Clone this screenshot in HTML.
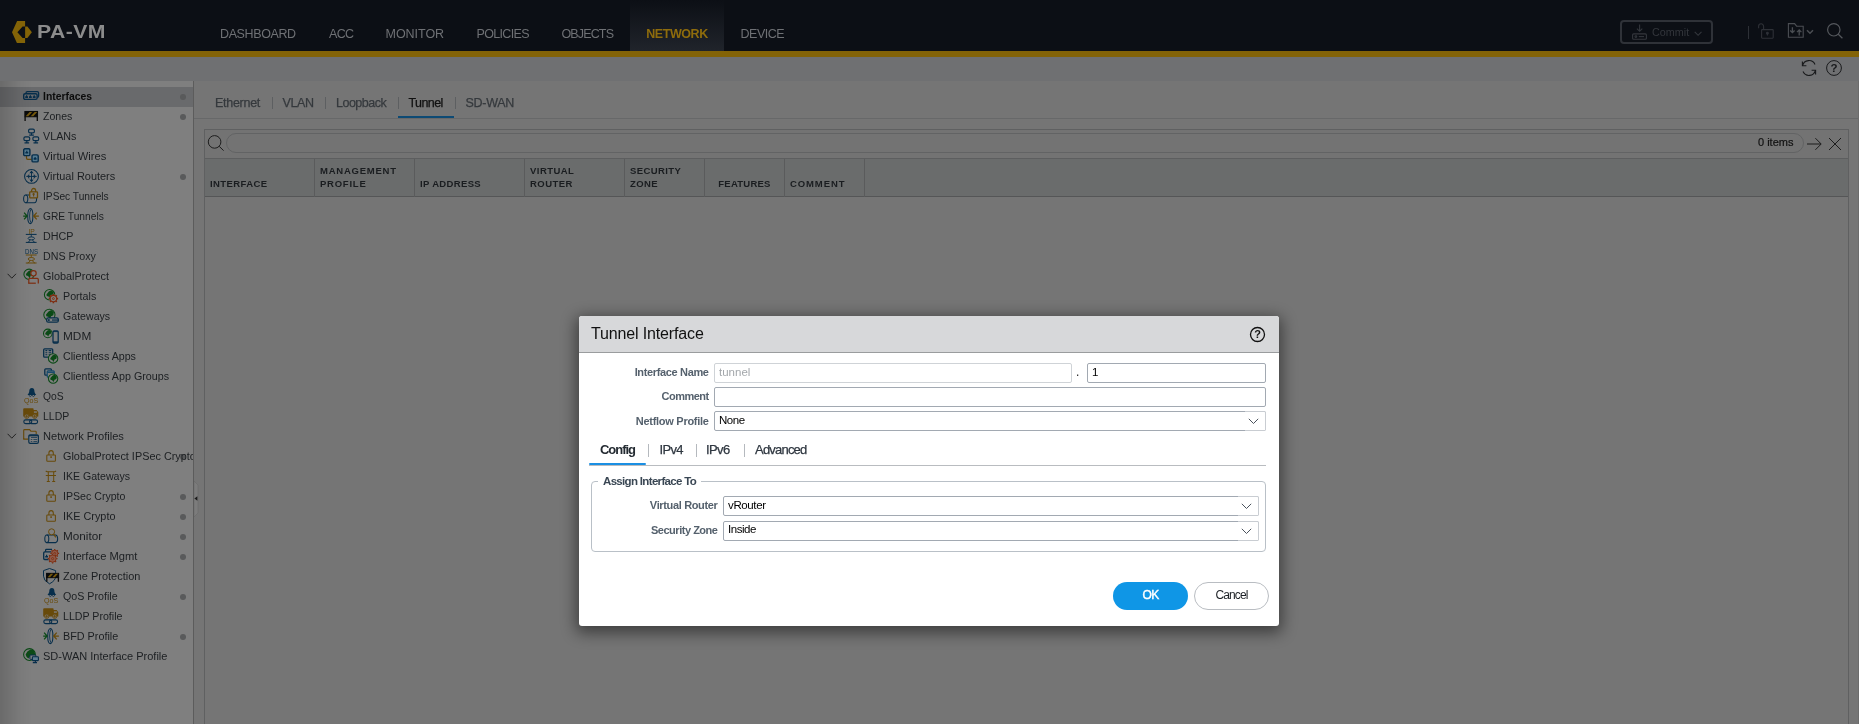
<!DOCTYPE html>
<html lang="en">
<head>
<meta charset="utf-8">
<title>PA-VM</title>
<style>
*{box-sizing:border-box;margin:0;padding:0}
html,body{width:1859px;height:724px;overflow:hidden;background:#757575;font-family:"Liberation Sans",sans-serif;font-size:12px;color:#1d1d1d}
.abs{position:absolute}
#root{position:absolute;left:0;top:0;width:1859px;height:724px;overflow:hidden;will-change:transform;transform:translateZ(0)}
#hdr{position:absolute;left:0;top:0;width:1859px;height:51px;background:#0c0f15}
#gold{position:absolute;left:0;top:51px;width:1859px;height:6px;background:#836307}
#tb{position:absolute;left:0;top:57px;width:1859px;height:24px;background:#6f7072}
#brand{position:absolute;left:37px;top:20px;font-weight:bold;font-size:19px;line-height:24px;color:#8c8c8c;letter-spacing:0.4px;transform-origin:0 0;transform:scaleX(1.115);white-space:nowrap}
.nav{position:absolute;top:0;height:51px;line-height:15px;font-size:12.5px;color:#6f7175;white-space:nowrap;padding-top:27px}
.nav.act{color:#8e6c0c;font-weight:bold;background:linear-gradient(#0c0f15,#20242b);text-align:center}
#commit{position:absolute;left:1620px;top:20px;width:93px;height:24px;border:2px solid #2f3238;border-radius:4px}
#commit span{position:absolute;left:30px;top:3px;font-size:10.8px;line-height:14px;color:#33363c}
/* sidebar */
#side{position:absolute;left:0;top:81px;width:193px;height:643px;background:#7f7f7f;overflow:hidden}
#sideb{position:absolute;left:193px;top:81px;width:1px;height:643px;background:#5c5c5c}
#sideshadow{position:absolute;left:0;top:81px;width:32px;height:643px;background:linear-gradient(90deg,rgba(0,0,0,.16),rgba(0,0,0,.1) 30%,rgba(0,0,0,.035) 65%,rgba(0,0,0,0))}
.it{position:absolute;left:0;width:193px;height:20px;line-height:19px;font-size:11.7px;color:#1c1f22;white-space:nowrap}
.it.sel{background:#696a6c;font-weight:bold;color:#0c0c0c}
.it span{position:absolute;left:43px;top:-1.2px;transform-origin:0 50%}
.it.c span{left:63px}
.it i{position:absolute;left:180px;top:7px;width:6px;height:6px;border-radius:3px;background:#595a5b}
.it svg{position:absolute;left:23px;top:1px;overflow:visible}
.it.c svg{left:43px}
/* main */
#main{position:absolute;left:194px;top:81px;width:1665px;height:643px;background:#757575}
.tab{position:absolute;top:96px;font-size:12.5px;line-height:14px;color:#35393d;-webkit-text-stroke:0.25px #35393d;white-space:nowrap}
.tsep{position:absolute;top:97px;width:1px;height:12px;background:#5d5f61}
#grid{position:absolute;left:204px;top:129px;width:1645px;height:600px;border:1px solid #5f6061;background:#757575}
.hc{position:absolute;top:29px;height:38px;border-right:1px solid #5a5b5c;font-size:9.5px;font-weight:bold;line-height:13px;color:#1a1d20;white-space:nowrap}
.hc span{position:absolute;left:5px;bottom:7.5px}
/* dialog */
#dlg{position:absolute;left:579px;top:316px;width:700px;height:310px;background:#fff;border-radius:3px;box-shadow:0 4px 15px 3px rgba(0,0,0,.47)}
#dlgh{position:absolute;left:0;top:0;width:700px;height:37px;background:#d7d8da;border-radius:3px 3px 0 0;border-bottom:1px solid #9a9c9e}
.lbl{position:absolute;font-size:11px;font-weight:bold;line-height:14px;color:#55616d;text-align:right;white-space:nowrap}
.inp{position:absolute;height:20px;border:1px solid #a2a9b2;border-radius:2px;background:#fff;font-size:11.5px;line-height:17px;padding-left:4px;color:#000}
.dtab{position:absolute;top:126px;font-size:13px;line-height:16px;color:#2f3740;-webkit-text-stroke:0.25px #2f3740;white-space:nowrap}
.dsep{position:absolute;top:128px;width:1px;height:13px;background:#b5b9be}
.trg{position:absolute;right:-1px;top:-1px;width:21px;height:20px;border:1px solid #c9cdd2;border-left:none;border-radius:0 2px 2px 0;background:#fff}
</style>
</head>
<body>
<div id="root">
<div id="hdr"></div>
<div id="gold"></div>
<div id="tb"></div>
<svg class="abs" style="left:12px;top:20.8px" width="20" height="22.4" viewBox="0 0 20 22.4"><path d="M5.1 0H13.1V5.4H10.6L5.4 11.2L10.6 17H13.1V22.4H5.1L0 11.2Z" fill="#836307"/><path d="M13.1 5.4H15.4L19.9 11.2L15.4 17H13.1Z" fill="#836307"/></svg>
<div id="brand">PA-VM</div>
<div class="nav" style="left:220px;letter-spacing:-0.38px">DASHBOARD</div>
<div class="nav" style="left:329px;letter-spacing:-0.63px">ACC</div>
<div class="nav" style="left:385.5px;letter-spacing:-0.03px">MONITOR</div>
<div class="nav" style="left:476.5px;letter-spacing:-0.67px">POLICIES</div>
<div class="nav" style="left:561.5px;letter-spacing:-0.86px">OBJECTS</div>
<div class="nav act" style="left:630px;width:94px;letter-spacing:-0.42px">NETWORK</div>
<div class="nav" style="left:740.5px;letter-spacing:-0.49px">DEVICE</div>
<div id="commit"><svg class="abs" style="left:10px;top:2px" width="16" height="17" viewBox="0 0 16 17" fill="none" stroke="#34373d" stroke-width="1.1"><path d="M7.6 0.6V7.2M4.9 4.6L7.6 7.3L10.3 4.6"/><rect x="0.6" y="9.9" width="13.8" height="5.4" rx="1"/><circle cx="3.9" cy="12.6" r="0.9"/><path d="M6.8 12.6H12"/></svg><span>Commit</span><svg class="abs" style="left:72px;top:8.5px" width="9" height="6" viewBox="0 0 9 6" fill="none" stroke="#34373d" stroke-width="1.1"><path d="M0.7 0.9L4.1 4.3L7.5 0.9"/></svg></div>
<div class="abs" style="left:1748px;top:26px;width:1px;height:13px;background:#2d3036"></div>
<svg class="abs" style="left:1757px;top:22px" width="18" height="18" viewBox="0 0 18 18" fill="none" stroke="#2e3137" stroke-width="1.1"><path d="M1.6 6.3V4.3A2.5 2.5 0 0 1 6.6 4.3V7.6"/><rect x="4.6" y="7.6" width="11.6" height="8.6" rx="0.6"/><circle cx="10.4" cy="11.2" r="0.9" fill="#2e3137"/><path d="M10.4 11.6V13.6"/></svg>
<svg class="abs" style="left:1787px;top:22px" width="28" height="18" viewBox="0 0 28 18" fill="none" stroke="#4b4e53" stroke-width="1.1"><path d="M1.4 15.2V1.6H7.6L9.6 4.2H16.2V15.2Z"/><path d="M5.4 5.2V10.6M3.2 8.5L5.4 10.7L7.6 8.5M12.2 13.4V8M10 10.1L12.2 7.9L14.4 10.1" stroke-width="1.3"/><path d="M20 8.2L23 11.2L26 8.2" stroke-width="1.5"/></svg>
<svg class="abs" style="left:1825px;top:22px" width="20" height="18" viewBox="0 0 20 18" fill="none" stroke="#55585d" stroke-width="1.2"><circle cx="8.8" cy="7.8" r="6.2"/><path d="M13.3 12.2L17.4 16.2"/></svg>
<svg class="abs" style="left:1800px;top:59px" width="18" height="18" viewBox="0 0 18 18" fill="none" stroke="#191a1c" stroke-width="1.1"><path d="M2.6 6.6A6.6 6.6 0 0 1 15 5.4M15.4 11.4A6.6 6.6 0 0 1 3 12.6"/><path d="M2.4 2.6V6.8H6.4M15.6 15.4V11.2H11.6"/></svg>
<svg class="abs" style="left:1825px;top:59px" width="18" height="18" viewBox="0 0 18 18"><circle cx="9" cy="9" r="7.4" fill="none" stroke="#191a1c" stroke-width="1"/><text x="9" y="13" text-anchor="middle" font-family="Liberation Sans, sans-serif" font-size="11.5" font-weight="bold" fill="#191a1c">?</text></svg>

<div id="side"><!--S-->
<div class="it sel" style="top:6px"><i></i><svg width="17" height="17" viewBox="0 0 17 17" fill="none" ><rect x="3" y="3.6" width="12.6" height="5.8" rx="1.4" stroke="#072e4b" stroke-width="1.30"/><rect x="0.7" y="5.7" width="13.4" height="5.7" rx="1.4" fill="#696a6c" stroke="#072e4b" stroke-width="1.40"/><path d="M2.2 10.0V8.299999999999999H3.0V7.199999999999999H4.2V8.299999999999999H5.0V10.0Z" fill="#072e4b"/><path d="M6.0 10.0V8.299999999999999H6.800000000000001V7.199999999999999H8.0V8.299999999999999H8.8V10.0Z" fill="#072e4b"/><path d="M9.799999999999999 10.0V8.299999999999999H10.6V7.199999999999999H11.799999999999999V8.299999999999999H12.6V10.0Z" fill="#072e4b"/></svg><span style="transform:scaleX(0.890)">Interfaces</span></div>
<div class="it" style="top:26px"><i></i><svg width="17" height="17" viewBox="0 0 17 17" fill="none" ><rect x="1.9" y="3.5" width="12.6" height="5.2" fill="#0b0b0b" stroke="#0b0b0b" stroke-width="1.10"/><path d="M6.62 3.9L9.14 3.9L5.24 8.299999999999999L2.72 8.299999999999999ZM11.66 3.9L14.18 3.9L10.28 8.299999999999999L7.76 8.299999999999999Z" fill="#76590c"/><path d="M2.1 8.7V12.899999999999999M14.3 8.7V12.899999999999999" stroke="#0b0b0b" stroke-width="1.30"/></svg><span style="transform:scaleX(0.901)">Zones</span></div>
<div class="it" style="top:46px"><svg width="17" height="17" viewBox="0 0 17 17" fill="none" ><g stroke="#072e4b" stroke-width="1.15"><rect x="5.6" y="1.1" width="5.8" height="3.8" rx="1.4"/><path d="M8.5 4.9V6.9M6.2 7.1H10.8"/><rect x="0.9" y="8.8" width="5.8" height="3.8" rx="1.4"/><path d="M3.8 12.6V14.6M1.5 14.8H6.1"/><rect x="9.9" y="8.8" width="5.8" height="3.8" rx="1.4"/><path d="M12.8 12.6V14.6M10.5 14.8H15.1"/></g></svg><span style="transform:scaleX(0.920)">VLANs</span></div>
<div class="it" style="top:66px"><svg width="17" height="17" viewBox="0 0 17 17" fill="none" ><path d="M3.5 8V10Q3.5 11.3 4.8 11.3H8.6" stroke="#684a0a" stroke-width="1.20"/><rect x="0.7" y="0.8" width="6.2" height="6.8" rx="1.2" fill="#557a90" stroke="#072e4b" stroke-width="1.40"/><path d="M2.4 5.6V3.9000000000000004H3.1999999999999997V2.8000000000000003H4.3999999999999995V3.9000000000000004H5.199999999999999V5.6Z" fill="#072e4b"/><rect x="9" y="6.9" width="6.2" height="7" rx="1.2" fill="#557a90" stroke="#072e4b" stroke-width="1.40"/><path d="M10.7 11.8V10.1H11.5V9.0H12.7V10.1H13.5V11.8Z" fill="#072e4b"/></svg><span style="transform:scaleX(0.958)">Virtual Wires</span></div>
<div class="it" style="top:86px"><i></i><svg width="17" height="17" viewBox="0 0 17 17" fill="none" ><circle cx="8.5" cy="8.4" r="6.9" stroke="#072e4b" stroke-width="1.05"/><path d="M8.5 3.6V13.2M3.4 8.4H13.6" stroke="#072e4b" stroke-width="0.95"/><path d="M8.5 2.6L6.6 5H10.4ZM8.5 14.2L6.6 11.8H10.4ZM7.4 8.4L5.2 6.6V10.2ZM9.6 8.4L11.8 6.6V10.2Z" fill="#072e4b"/><path d="M8.5 4L12.9 8.4L8.5 12.8L4.1 8.4Z" stroke="#072e4b" stroke-width="0.70" stroke-dasharray="1 0.8"/></svg><span style="transform:scaleX(0.937)">Virtual Routers</span></div>
<div class="it" style="top:106px"><svg width="17" height="17" viewBox="0 0 17 17" fill="none" ><path d="M2.6 6.9H11.4A2.2 3.9 0 0 1 11.4 14.7H2.6" stroke="#072e4b" stroke-width="1.05"/><ellipse cx="2.7" cy="10.8" rx="2.1" ry="3.9" stroke="#072e4b" stroke-width="1.05"/><rect x="6.7" y="3.9" width="7.8" height="6" rx="0.6" fill="#7f7f7f" stroke="#684a0a" stroke-width="1.30"/><path d="M8.6 3.9V2.6A2 2.1 0 0 1 12.6 2.6V3.9" stroke="#684a0a" stroke-width="1.30"/><circle cx="10.6" cy="6.2" r="1.1" fill="#684a0a"/><path d="M10.6 6.4V8.4" stroke="#684a0a" stroke-width="1.10"/></svg><span style="transform:scaleX(0.872)">IPSec Tunnels</span></div>
<div class="it" style="top:126px"><svg width="17" height="17" viewBox="0 0 17 17" fill="none" ><ellipse cx="7.3" cy="8" rx="2.6" ry="7.6" stroke="#072e4b" stroke-width="1.05"/><path d="M8.0 1.2C6.1 4 6.1 12 8.0 14.8" stroke="#072e4b" stroke-width="0.85"/><path d="M0.2 8H4.3M1.0999999999999996 4.6L4.1 8L1.0999999999999996 11.4" stroke="#0b4a16" stroke-width="1.25"/><path d="M15.899999999999999 8H10.5M13.7 4.6L10.7 8L13.7 11.4" stroke="#684a0a" stroke-width="1.25"/></svg><span style="transform:scaleX(0.875)">GRE Tunnels</span></div>
<div class="it" style="top:146px"><svg width="17" height="17" viewBox="0 0 17 17" fill="none" ><text x="8.6" y="5.5" text-anchor="middle" font-family="Liberation Sans, sans-serif" font-size="6.4" fill="#684a0a" textLength="6.4" lengthAdjust="spacingAndGlyphs">IP</text><path d="M2.8 6.4H13.6M2.8 14.4H13.6" stroke="#072e4b" stroke-width="1.00"/><ellipse cx="8.3" cy="10.4" rx="3.2" ry="1.5" stroke="#072e4b" stroke-width="0.95"/><path d="M8.3 6.4V8.9M7 11.9Q6.8 13.8 4.6 14.4M9.6 11.9Q9.8 13.8 12 14.4" stroke="#072e4b" stroke-width="0.85"/></svg><span style="transform:scaleX(0.920)">DHCP</span></div>
<div class="it" style="top:166px"><svg width="17" height="17" viewBox="0 0 17 17" fill="none" ><text x="8.5" y="5.7" text-anchor="middle" font-family="Liberation Sans, sans-serif" font-size="6.4" fill="#072e4b" textLength="13" lengthAdjust="spacingAndGlyphs">DNS</text><path d="M2.8 7H13.6M2.8 15H13.6" stroke="#684a0a" stroke-width="1.00"/><ellipse cx="8.3" cy="11" rx="3.2" ry="1.5" stroke="#684a0a" stroke-width="0.95"/><path d="M8.3 7V9.5M7 12.5Q6.8 14.4 4.6 15M9.6 12.5Q9.8 14.4 12 15" stroke="#684a0a" stroke-width="0.85"/></svg><span style="transform:scaleX(0.914)">DNS Proxy</span></div>
<div class="it" style="top:186px"><svg style="left:7px;top:6px" width="10" height="7" viewBox="0 0 10 7" fill="none"><path d="M0.6 0.8L4.8 5.2L9 0.8" stroke="#262626" stroke-width="1"/></svg><svg width="17" height="17" viewBox="0 0 17 17" fill="none" ><circle cx="6.1" cy="6.3" r="5.20" stroke="#0b4a16" stroke-width="1.05"/><path d="M2.98 6.04L5.32 3.18L7.92 1.88L10.26 3.96L9.74 6.82L7.66 7.60L6.72 10.20L5.06 8.12L3.24 7.60Z" fill="#0b4a16"/><circle cx="10.5" cy="5.3" r="2.7" fill="#7f7f7f" stroke="#7e2d10" stroke-width="1.20"/><path d="M5.8 15.2V11.4Q5.8 10.4 6.8 10.4H14.3Q15.3 10.4 15.3 11.4V15.6" fill="#7f7f7f" stroke="#7e2d10" stroke-width="1.20"/><path d="M5.2 15.2H12.8" stroke="#7e2d10" stroke-width="1.20"/></svg><span style="transform:scaleX(0.933)">GlobalProtect</span></div>
<div class="it c" style="top:206px"><svg width="17" height="17" viewBox="0 0 17 17" fill="none" ><circle cx="6.6" cy="6.7" r="5.20" stroke="#0b4a16" stroke-width="1.05"/><path d="M3.48 6.44L5.82 3.58L8.42 2.28L10.76 4.36L10.24 7.22L8.16 8.00L7.22 10.60L5.56 8.52L3.74 8.00Z" fill="#0b4a16"/><circle cx="10.4" cy="10.6" r="4.03" fill="#7f7f7f"/><path d="M10.40 7.40L10.40 5.90M12.66 8.34L13.72 7.28M13.60 10.60L15.10 10.60M12.66 12.86L13.72 13.92M10.40 13.80L10.40 15.30M8.14 12.86L7.08 13.92M7.20 10.60L5.70 10.60M8.14 8.34L7.08 7.28" stroke="#7e2d10" stroke-width="1.59"/><circle cx="10.4" cy="10.6" r="3.20" fill="#7f7f7f" stroke="#7e2d10" stroke-width="1.10"/><circle cx="10.4" cy="10.6" r="0.96" fill="none" stroke="#7e2d10" stroke-width="0.88"/></svg><span style="transform:scaleX(0.914)">Portals</span></div>
<div class="it c" style="top:226px"><svg width="17" height="17" viewBox="0 0 17 17" fill="none" ><circle cx="6.4" cy="6.8" r="5.60" stroke="#0b4a16" stroke-width="1.05"/><path d="M3.04 6.52L5.56 3.44L8.36 2.04L10.88 4.28L10.32 7.36L8.08 8.20L7.07 11.00L5.28 8.76L3.32 8.20Z" fill="#0b4a16"/><rect x="3.7" y="9.9" width="11.6" height="4.3" rx="1.5" fill="#7f7f7f" stroke="#072e4b" stroke-width="1.30"/><rect x="5" y="11.2" width="1.7" height="1.7" fill="#072e4b"/><path d="M9 12.05H15.4" stroke="#072e4b" stroke-width="1.20"/></svg><span style="transform:scaleX(0.907)">Gateways</span></div>
<div class="it c" style="top:246px"><svg width="17" height="17" viewBox="0 0 17 17" fill="none" ><circle cx="4.8" cy="5.4" r="4.30" stroke="#0b4a16" stroke-width="1.05"/><path d="M2.22 5.19L4.15 2.82L6.30 1.74L8.24 3.46L7.81 5.83L6.09 6.48L5.32 8.62L3.94 6.91L2.43 6.48Z" fill="#0b4a16"/><rect x="10" y="2.8" width="5.2" height="12.4" rx="1.1" fill="#7f7f7f" stroke="#072e4b" stroke-width="1.25"/><path d="M10 14.1H15.2" stroke="#072e4b" stroke-width="1.50"/><path d="M10 3.6H15.2" stroke="#072e4b" stroke-width="0.90"/></svg><span style="transform:scaleX(1.012)">MDM</span></div>
<div class="it c" style="top:266px"><svg width="17" height="17" viewBox="0 0 17 17" fill="none" ><rect x="0.7" y="0.8" width="9" height="8.4" rx="0.9" stroke="#072e4b" stroke-width="1.30"/><path d="M2.4 2.6H4.3M5.6 2.6H8.3M2.4 4.7H4.3M5.6 4.7H8.3M2.4 6.8H4.3M5.6 6.8H8.3" stroke="#072e4b" stroke-width="1.10"/><circle cx="10.1" cy="10.4" r="4.70" fill="#7f7f7f" stroke="#0b4a16" stroke-width="1.05"/><path d="M7.28 10.17L9.39 7.58L11.74 6.41L13.86 8.29L13.39 10.87L11.51 11.58L10.66 13.93L9.16 12.04L7.51 11.58Z" fill="#0b4a16"/></svg><span style="transform:scaleX(0.913)">Clientless Apps</span></div>
<div class="it c" style="top:286px"><svg width="17" height="17" viewBox="0 0 17 17" fill="none" ><rect x="1.8" y="0.8" width="6.6" height="6.4" rx="0.9" stroke="#072e4b" stroke-width="1.30"/><rect x="4.2" y="2.8" width="7" height="6.4" rx="0.9" fill="#7f7f7f" stroke="#164a6c" stroke-width="1.20"/><path d="M4.2 4.3H11.2" stroke="#164a6c" stroke-width="1.30"/><circle cx="10.1" cy="10.6" r="4.70" fill="#7f7f7f" stroke="#0b4a16" stroke-width="1.05"/><path d="M7.28 10.37L9.39 7.78L11.74 6.60L13.86 8.48L13.39 11.07L11.51 11.78L10.66 14.12L9.16 12.24L7.51 11.78Z" fill="#0b4a16"/></svg><span style="transform:scaleX(0.917)">Clientless App Groups</span></div>
<div class="it" style="top:306px"><svg width="17" height="17" viewBox="0 0 17 17" fill="none" ><path d="M8.85 0.1C6.9 0.1 6.3 1.7 6.3 3.1C6.3 4.7 5.6 5.8 4.5 6.9H13.2C12.1 5.8 11.4 4.7 11.4 3.1C11.4 1.7 10.8 0.1 8.85 0.1Z" fill="#072e4b"/><path d="M5.6 7.2L7.3 8.5L8.85 7.3L10.4 8.5L12.1 7.2" stroke="#072e4b" stroke-width="0.90"/><text x="8.2" y="15.2" text-anchor="middle" font-family="Liberation Sans, sans-serif" font-size="7.6" fill="#684a0a" textLength="14.2" lengthAdjust="spacingAndGlyphs">QoS</text></svg><span style="transform:scaleX(0.880)">QoS</span></div>
<div class="it" style="top:326px"><svg width="17" height="17" viewBox="0 0 17 17" fill="none" ><path d="M0.2 1.2Q0.2 0.2 1.2 0.2H9.8Q10.6 0.2 10.6 1V2H13.6L15.3 4.2V8.6H0.2Z" fill="#684a0a"/><rect x="10.9" y="3.2" width="3" height="1.7" fill="#7f7f7f" opacity="0.8"/><circle cx="3.7" cy="8.2" r="2.2" fill="#7f7f7f" stroke="#684a0a" stroke-width="0.90"/><circle cx="11.7" cy="8.2" r="2.2" fill="#7f7f7f" stroke="#684a0a" stroke-width="0.90"/><path d="M3.7 6.6V9.8M2.1 8.2H5.3M11.7 6.6V9.8M10.1 8.2H13.3" stroke="#684a0a" stroke-width="0.90"/><rect x="0.8" y="11.9" width="8" height="3.7" rx="1.85" stroke="#072e4b" stroke-width="1.10"/><rect x="6.6" y="11.9" width="8" height="3.7" rx="1.85" stroke="#072e4b" stroke-width="1.10"/></svg><span style="transform:scaleX(0.898)">LLDP</span></div>
<div class="it" style="top:346px"><svg style="left:7px;top:6px" width="10" height="7" viewBox="0 0 10 7" fill="none"><path d="M0.6 0.8L4.8 5.2L9 0.8" stroke="#262626" stroke-width="1"/></svg><svg width="17" height="17" viewBox="0 0 17 17" fill="none" ><path d="M0.7 10.4V2.4Q0.7 1.6 1.5 1.6H6.6L7.9 3.2H12.4Q13.2 3.2 13.2 4V6" stroke="#684a0a" stroke-width="1.10"/><path d="M0.7 10V11.1H5" stroke="#684a0a" stroke-width="1.10"/><rect x="5.8" y="6.8" width="9.6" height="8.6" rx="1.4" fill="#7f7f7f" stroke="#072e4b" stroke-width="1.15"/><path d="M5.8 7.7H15.4" stroke="#072e4b" stroke-width="1.20"/><path d="M8 9.5H14.2M7.8 11.5H9.3M10.4 11.5H14.2M7.8 13.5H9.3M10.4 13.5H14.2" stroke="#072e4b" stroke-width="0.70"/></svg><span style="transform:scaleX(0.951)">Network Profiles</span></div>
<div class="it c" style="top:366px"><i></i><svg width="17" height="17" viewBox="0 0 17 17" fill="none" ><rect x="3.8" y="6.9" width="8.6" height="6.4" rx="0.7" stroke="#684a0a" stroke-width="1.05"/><path d="M5.9 6.9V5A2.2 2.4 0 0 1 10.3 5V6.9" stroke="#684a0a" stroke-width="1.05"/><rect x="7.3" y="8.3" width="1.6" height="1.6" fill="#684a0a"/></svg><span style="transform:scaleX(0.930)">GlobalProtect IPSec Crypto</span></div>
<div class="it c" style="top:386px"><svg width="17" height="17" viewBox="0 0 17 17" fill="none" ><path d="M2.8 2.9Q3.4 3.7 4.4 3.8H11.4Q12.4 3.7 13 2.9M2.8 7.4H13" stroke="#684a0a" stroke-width="1.05"/><path d="M5.3 3.8V13.5M10.7 3.8V13.5" stroke="#684a0a" stroke-width="1.00"/><path d="M3.8 13.5H6.8M9.2 13.5H12.2" stroke="#684a0a" stroke-width="1.00"/></svg><span style="transform:scaleX(0.905)">IKE Gateways</span></div>
<div class="it c" style="top:406px"><i></i><svg width="17" height="17" viewBox="0 0 17 17" fill="none" ><rect x="3.8" y="6.9" width="8.6" height="6.4" rx="0.7" stroke="#684a0a" stroke-width="1.05"/><path d="M5.9 6.9V5A2.2 2.4 0 0 1 10.3 5V6.9" stroke="#684a0a" stroke-width="1.05"/><rect x="7.3" y="8.3" width="1.6" height="1.6" fill="#684a0a"/></svg><span style="transform:scaleX(0.907)">IPSec Crypto</span></div>
<div class="it c" style="top:426px"><i></i><svg width="17" height="17" viewBox="0 0 17 17" fill="none" ><rect x="3.8" y="6.9" width="8.6" height="6.4" rx="0.7" stroke="#684a0a" stroke-width="1.05"/><path d="M5.9 6.9V5A2.2 2.4 0 0 1 10.3 5V6.9" stroke="#684a0a" stroke-width="1.05"/><rect x="7.3" y="8.3" width="1.6" height="1.6" fill="#684a0a"/></svg><span style="transform:scaleX(0.928)">IKE Crypto</span></div>
<div class="it c" style="top:446px"><i></i><svg width="17" height="17" viewBox="0 0 17 17" fill="none" ><path d="M3.7 6.9H12.8A2.2 3.9 0 0 1 12.8 14.6H3.7" stroke="#072e4b" stroke-width="1.05"/><ellipse cx="3.8" cy="10.75" rx="2" ry="3.85" stroke="#072e4b" stroke-width="1.05"/><circle cx="8.6" cy="3.8" r="3" fill="#7f7f7f" stroke="#684a0a" stroke-width="1.00"/><path d="M10.6 6.2L12.8 9.4" stroke="#684a0a" stroke-width="1.20"/></svg><span style="transform:scaleX(1.005)">Monitor</span></div>
<div class="it c" style="top:466px"><i></i><svg width="17" height="17" viewBox="0 0 17 17" fill="none" ><path d="M2.6 3.7V2.2Q2.6 1.4 3.4 1.4H9" stroke="#072e4b" stroke-width="1.20"/><rect x="0.7" y="3.9" width="8.6" height="7.6" rx="1" stroke="#072e4b" stroke-width="1.30"/><path d="M2.2 9.6V7.8999999999999995H3.0V6.799999999999999H4.2V7.8999999999999995H5.0V9.6Z" fill="#072e4b"/><circle cx="11.7" cy="5.4" r="3.86" fill="#7f7f7f"/><path d="M11.70 2.20L11.70 1.00M13.96 3.14L14.81 2.29M14.90 5.40L16.10 5.40M13.96 7.66L14.81 8.51M11.70 8.60L11.70 9.80M9.44 7.66L8.59 8.51M8.50 5.40L7.30 5.40M9.44 3.14L8.59 2.29" stroke="#7e2d10" stroke-width="1.30"/><circle cx="11.7" cy="5.4" r="3.20" fill="#8f5a48" stroke="#7e2d10" stroke-width="0.90"/><circle cx="11.7" cy="5.4" r="0.96" fill="none" stroke="#7e2d10" stroke-width="0.72"/><circle cx="9.6" cy="10.6" r="4.32" fill="#7f7f7f"/><path d="M9.60 7.00L9.60 5.70M12.15 8.05L13.06 7.14M13.20 10.60L14.50 10.60M12.15 13.15L13.06 14.06M9.60 14.20L9.60 15.50M7.05 13.15L6.14 14.06M6.00 10.60L4.70 10.60M7.05 8.05L6.14 7.14" stroke="#7e2d10" stroke-width="1.30"/><circle cx="9.6" cy="10.6" r="3.60" fill="#8f5a48" stroke="#7e2d10" stroke-width="0.90"/><circle cx="9.6" cy="10.6" r="1.08" fill="none" stroke="#7e2d10" stroke-width="0.72"/></svg><span style="transform:scaleX(0.953)">Interface Mgmt</span></div>
<div class="it c" style="top:486px"><svg width="17" height="17" viewBox="0 0 17 17" fill="none" ><path d="M6.5 0.5L12.6 2.6V8.2Q12.6 12.8 6.5 15.8Q0.5 12.8 0.5 8.2V2.6Z" stroke="#072e4b" stroke-width="1.00"/><rect x="3.6" y="5.4" width="12" height="4.2" fill="#0b0b0b" stroke="#0b0b0b" stroke-width="1.10"/><path d="M7.82 5.800000000000001L10.21 5.800000000000001L7.07 9.200000000000001L4.67 9.200000000000001ZM12.61 5.800000000000001L15.01 5.800000000000001L11.87 9.200000000000001L9.46 9.200000000000001Z" fill="#76590c"/><path d="M3.8000000000000003 9.600000000000001V13.8M15.4 9.600000000000001V13.8" stroke="#0b0b0b" stroke-width="1.30"/></svg><span style="transform:scaleX(0.937)">Zone Protection</span></div>
<div class="it c" style="top:506px"><i></i><svg width="17" height="17" viewBox="0 0 17 17" fill="none" ><path d="M8.85 0.1C6.9 0.1 6.3 1.7 6.3 3.1C6.3 4.7 5.6 5.8 4.5 6.9H13.2C12.1 5.8 11.4 4.7 11.4 3.1C11.4 1.7 10.8 0.1 8.85 0.1Z" fill="#072e4b"/><path d="M5.6 7.2L7.3 8.5L8.85 7.3L10.4 8.5L12.1 7.2" stroke="#072e4b" stroke-width="0.90"/><text x="8.2" y="15.2" text-anchor="middle" font-family="Liberation Sans, sans-serif" font-size="7.6" fill="#684a0a" textLength="14.2" lengthAdjust="spacingAndGlyphs">QoS</text></svg><span style="transform:scaleX(0.913)">QoS Profile</span></div>
<div class="it c" style="top:526px"><svg width="17" height="17" viewBox="0 0 17 17" fill="none" ><path d="M0.2 1.2Q0.2 0.2 1.2 0.2H9.8Q10.6 0.2 10.6 1V2H13.6L15.3 4.2V8.6H0.2Z" fill="#684a0a"/><rect x="10.9" y="3.2" width="3" height="1.7" fill="#7f7f7f" opacity="0.8"/><circle cx="3.7" cy="8.2" r="2.2" fill="#7f7f7f" stroke="#684a0a" stroke-width="0.90"/><circle cx="11.7" cy="8.2" r="2.2" fill="#7f7f7f" stroke="#684a0a" stroke-width="0.90"/><path d="M3.7 6.6V9.8M2.1 8.2H5.3M11.7 6.6V9.8M10.1 8.2H13.3" stroke="#684a0a" stroke-width="0.90"/><rect x="0.8" y="11.9" width="8" height="3.7" rx="1.85" stroke="#072e4b" stroke-width="1.10"/><rect x="6.6" y="11.9" width="8" height="3.7" rx="1.85" stroke="#072e4b" stroke-width="1.10"/></svg><span style="transform:scaleX(0.909)">LLDP Profile</span></div>
<div class="it c" style="top:546px"><i></i><svg width="17" height="17" viewBox="0 0 17 17" fill="none" ><ellipse cx="7.3" cy="8" rx="2.6" ry="7.6" stroke="#072e4b" stroke-width="1.05"/><path d="M8.0 1.2C6.1 4 6.1 12 8.0 14.8" stroke="#072e4b" stroke-width="0.85"/><path d="M0.2 8H4.3M1.0999999999999996 4.6L4.1 8L1.0999999999999996 11.4" stroke="#0b4a16" stroke-width="1.25"/><path d="M15.899999999999999 8H10.5M13.7 4.6L10.7 8L13.7 11.4" stroke="#684a0a" stroke-width="1.25"/></svg><span style="transform:scaleX(0.924)">BFD Profile</span></div>
<div class="it" style="top:566px"><svg width="17" height="17" viewBox="0 0 17 17" fill="none" ><circle cx="6.5" cy="6.5" r="5.9" stroke="#0b4a16" stroke-width="1.05"/><path d="M2.6 6.4L4.4 3.6L7.4 1.6L10.6 2.2L12 5V8.2H7L5.4 10.4L3.6 9Z" fill="#0b4a16"/><rect x="6.9" y="7" width="6" height="4.4" rx="0.8" fill="#7f7f7f" stroke="#072e4b" stroke-width="1.00"/><rect x="9.4" y="8.8" width="6" height="3.8" rx="0.6" fill="#5f7d8f" stroke="#072e4b" stroke-width="1.10"/><path d="M12.4 12.6V14.4M9.8 14.6H14" stroke="#072e4b" stroke-width="1.10"/></svg><span style="transform:scaleX(0.942)">SD-WAN Interface Profile</span></div>
<!--/S--></div>
<div id="sideb"></div>
<div id="main"></div>
<div id="sideshadow"></div>
<svg class="abs" style="left:194px;top:481px" width="5" height="36" viewBox="0 0 5 36"><path d="M0 0L4 4V32L0 36Z" fill="#7c7c7c" stroke="#6a6a6a" stroke-width="0.6"/><path d="M0.4 17.5L3.4 15.2V19.8Z" fill="#1c1c1c"/></svg>
<div class="tab" style="left:215px;letter-spacing:-0.28px">Ethernet</div>
<div class="tsep" style="left:272px"></div>
<div class="tab" style="left:282.5px;letter-spacing:-0.4px">VLAN</div>
<div class="tsep" style="left:325px"></div>
<div class="tab" style="left:336px;letter-spacing:-0.5px">Loopback</div>
<div class="tsep" style="left:398px"></div>
<div class="tab" style="left:408.5px;letter-spacing:-0.58px;color:#111;-webkit-text-stroke:0.25px #111">Tunnel</div>
<div class="abs" style="left:398px;top:116px;width:56px;height:2px;background:#0d4a74"></div>
<div class="tsep" style="left:455px"></div>
<div class="tab" style="left:465.5px;letter-spacing:-0.3px">SD-WAN</div>
<div class="abs" style="left:194px;top:118px;width:1664px;height:1px;background:#676869"></div>
<div class="abs" style="left:1858px;top:81px;width:1px;height:643px;background:#6c6c6c"></div>
<div id="grid">
  <div class="abs" style="left:0;top:0;width:1643px;height:29px;background:#737373;border-bottom:1px solid #5d5e5f"></div>
  <svg class="abs" style="left:0px;top:3px" width="20" height="20" viewBox="0 0 20 20" fill="none" stroke="#1d1d1d" stroke-width="1"><circle cx="9.6" cy="8.9" r="6.3"/><path d="M14.2 13.3L18.6 17.6"/></svg>
  <div class="abs" style="left:21px;top:3px;width:1578px;height:20px;border:1px solid #626364;border-radius:10px"></div>
  <div class="abs" style="left:1553px;top:5px;width:40px;font-size:11px;line-height:14px;color:#111;white-space:nowrap;-webkit-text-stroke:0.2px #111">0 items</div>
  <svg class="abs" style="left:1601px;top:7px" width="16" height="14" viewBox="0 0 16 14" fill="none" stroke="#1d1d1d" stroke-width="1"><path d="M1 7H15M9.4 1.2L15.2 7L9.4 12.8"/></svg>
  <svg class="abs" style="left:1623px;top:7px" width="14" height="14" viewBox="0 0 14 14" fill="none" stroke="#1d1d1d" stroke-width="1"><path d="M1 1L13 13M13 1L1 13"/></svg>
  <div class="abs" style="left:0;top:29px;width:1643px;height:38px;background:#6a6c6c;border-bottom:1px solid #555657"></div>
  <div class="hc" style="left:0;width:110px"><span style="letter-spacing:0.42px">INTERFACE</span></div>
  <div class="hc" style="left:110px;width:100px"><span style="letter-spacing:0.76px">MANAGEMENT<br>PROFILE</span></div>
  <div class="hc" style="left:210px;width:110px"><span style="letter-spacing:0.35px">IP ADDRESS</span></div>
  <div class="hc" style="left:320px;width:100px"><span style="letter-spacing:0.45px">VIRTUAL<br>ROUTER</span></div>
  <div class="hc" style="left:420px;width:80px"><span style="letter-spacing:0.4px">SECURITY<br>ZONE</span></div>
  <div class="hc" style="left:500px;width:80px;text-align:center;padding-left:0"><span style="letter-spacing:0.23px;left:0;right:0">FEATURES</span></div>
  <div class="hc" style="left:580px;width:80px"><span style="letter-spacing:0.9px">COMMENT</span></div>
</div>

<div id="dlg">
  <div id="dlgh"></div>
  <div class="abs" style="left:12px;top:7.6px;font-size:16px;line-height:20px;color:#111;white-space:nowrap;letter-spacing:-0.15px">Tunnel Interface</div>
  <svg class="abs" style="left:670px;top:10px" width="17" height="17" viewBox="0 0 17 17"><circle cx="8.5" cy="8.5" r="7" fill="none" stroke="#111" stroke-width="1.3"/><text x="8.5" y="12.4" text-anchor="middle" font-family="Liberation Sans, sans-serif" font-size="11" font-weight="bold" fill="#111">?</text></svg>
  <div class="lbl" style="right:570.4px;top:48.5px;letter-spacing:-0.35px">Interface Name</div>
  <div class="inp" style="left:135px;top:47px;width:358px;border-color:#cfd3d7;color:#a3a7ab">tunnel</div>
  <div class="abs" style="left:497px;top:49px;font-size:12px;line-height:14px;color:#222">.</div>
  <div class="inp" style="left:508px;top:47px;width:179px">1</div>
  <div class="lbl" style="right:570.4px;top:72.5px;letter-spacing:-0.53px">Comment</div>
  <div class="inp" style="left:135px;top:71px;width:552px"></div>
  <div class="lbl" style="right:570.4px;top:97.5px;letter-spacing:-0.28px">Netflow Profile</div>
  <div class="inp" style="left:135px;top:95px;width:552px;letter-spacing:-0.47px;line-height:17px">None<b class="trg"></b></div>
  <svg class="abs chev" style="left:669px;top:102px" width="11" height="7" viewBox="0 0 11 7"><path d="M0.8 0.8L5.5 5.5L10.2 0.8" fill="none" stroke="#4a525c" stroke-width="1"/></svg>
  <div class="dtab" style="left:21px;font-weight:bold;letter-spacing:-1.02px;color:#232a31;-webkit-text-stroke:0">Config</div>
  <div class="dsep" style="left:69px"></div>
  <div class="dtab" style="left:80.5px;letter-spacing:-0.7px">IPv4</div>
  <div class="dsep" style="left:117px"></div>
  <div class="dtab" style="left:127px;letter-spacing:-0.63px">IPv6</div>
  <div class="dsep" style="left:165px"></div>
  <div class="dtab" style="left:176px;letter-spacing:-0.79px">Advanced</div>
  <div class="abs" style="left:10px;top:149px;width:677px;height:1px;background:#b9bcc0"></div>
  <div class="abs" style="left:10px;top:147px;width:57px;height:2.4px;background:#1b8fe3;border-radius:1px"></div>
  <div class="abs" style="left:12px;top:165px;width:675px;height:71px;border:1px solid #b9c0c7;border-radius:4px"></div>
  <div class="abs" style="left:19px;top:157.8px;padding:0 5px;background:#fff;font-size:11.5px;line-height:14px;font-weight:bold;color:#3a4754;white-space:nowrap;letter-spacing:-0.67px">Assign Interface To</div>
  <div class="lbl" style="right:561.5px;top:181.7px;letter-spacing:-0.35px">Virtual Router</div>
  <div class="inp" style="left:144px;top:180px;width:536px;letter-spacing:-0.37px">vRouter<b class="trg"></b></div>
  <svg class="abs chev" style="left:662px;top:187px" width="11" height="7" viewBox="0 0 11 7"><path d="M0.8 0.8L5.5 5.5L10.2 0.8" fill="none" stroke="#4a525c" stroke-width="1"/></svg>
  <div class="lbl" style="right:561.5px;top:206.7px;letter-spacing:-0.48px">Security Zone</div>
  <div class="inp" style="left:144px;top:205px;width:536px;letter-spacing:-0.45px;line-height:15px">Inside<b class="trg"></b></div>
  <svg class="abs chev" style="left:662px;top:212px" width="11" height="7" viewBox="0 0 11 7"><path d="M0.8 0.8L5.5 5.5L10.2 0.8" fill="none" stroke="#4a525c" stroke-width="1"/></svg>
  <div class="abs" style="left:534px;top:266px;width:75px;height:28px;border-radius:14px;background:#0f96e6;color:#fff;font-size:12px;-webkit-text-stroke:0.4px #fff;line-height:26px;text-align:center;letter-spacing:-0.75px">OK</div>
  <div class="abs" style="left:615px;top:266px;width:75px;height:28px;border-radius:14px;background:#fff;border:1px solid #b9bdc2;color:#1c2025;font-size:12px;line-height:25px;text-align:center;letter-spacing:-0.86px">Cancel</div>
</div>
</div>
</body>
</html>
